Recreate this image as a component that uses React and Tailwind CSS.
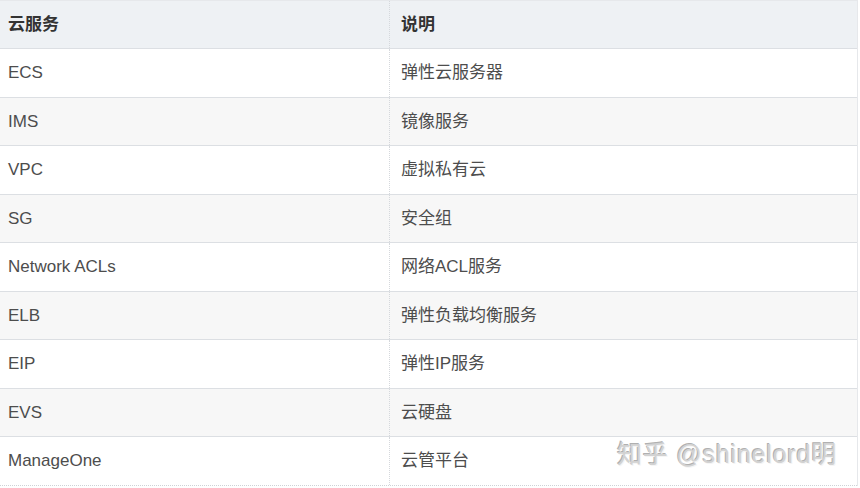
import React from "react";

const rows = [
    ["ECS", "弹性云服务器"],
    ["IMS", "镜像服务"],
    ["VPC", "虚拟私有云"],
    ["SG", "安全组"],
    ["Network ACLs", "网络ACL服务"],
    ["ELB", "弹性负载均衡服务"],
    ["EIP", "弹性IP服务"],
    ["EVS", "云硬盘"],
    ["ManageOne", "云管平台"],
];

const font = { fontFamily: '"Liberation Sans", Arial, "Noto Sans CJK SC", sans-serif' };

export default function App() {
    return (
        <div className="relative w-[860px] h-[488px] bg-white overflow-hidden" style={font}>
            <div className="w-[858px] border-t border-r border-[#e6e8eb]">
                <div className="flex h-[48px] bg-[#eef1f4] border-b border-[#dcdfe3] text-[17px] font-bold text-[#333]">
                    <div className="w-[390px] flex items-center pl-2 border-r border-dotted border-[#d5d8dc]">云服务</div>
                    <div className="flex-1 flex items-center pl-[11px]">说明</div>
                </div>
                {rows.map(([svc, desc], i) => (
                    <div
                        key={svc}
                        className={`flex h-[48.5px] text-[17px] text-[#4d4d4d] ${
                            i === rows.length - 1
                                ? "border-b border-dotted border-[#cfd2d6]"
                                : "border-b border-[#dcdfe3]"
                        } ${i % 2 === 1 ? "bg-[#f7f7f7]" : "bg-white"}`}
                    >
                        <div className="w-[390px] flex items-center pl-2 border-r border-dotted border-[#d5d8dc]">{svc}</div>
                        <div className="flex-1 flex items-center pl-[11px]">{desc}</div>
                    </div>
                ))}
            </div>
            <div
                className="absolute left-[617px] top-[436px] text-[25px] text-[#d2d2d2] tracking-[0.8px]"
                style={{ fontFamily: '"Liberation Sans", "Noto Sans CJK SC", sans-serif', textShadow: "1px 1px 0 #f5f5f5, -1px -1px 0 #b0b0b0" }}
            >
                知乎 @shinelord明
            </div>
        </div>
    );
}
